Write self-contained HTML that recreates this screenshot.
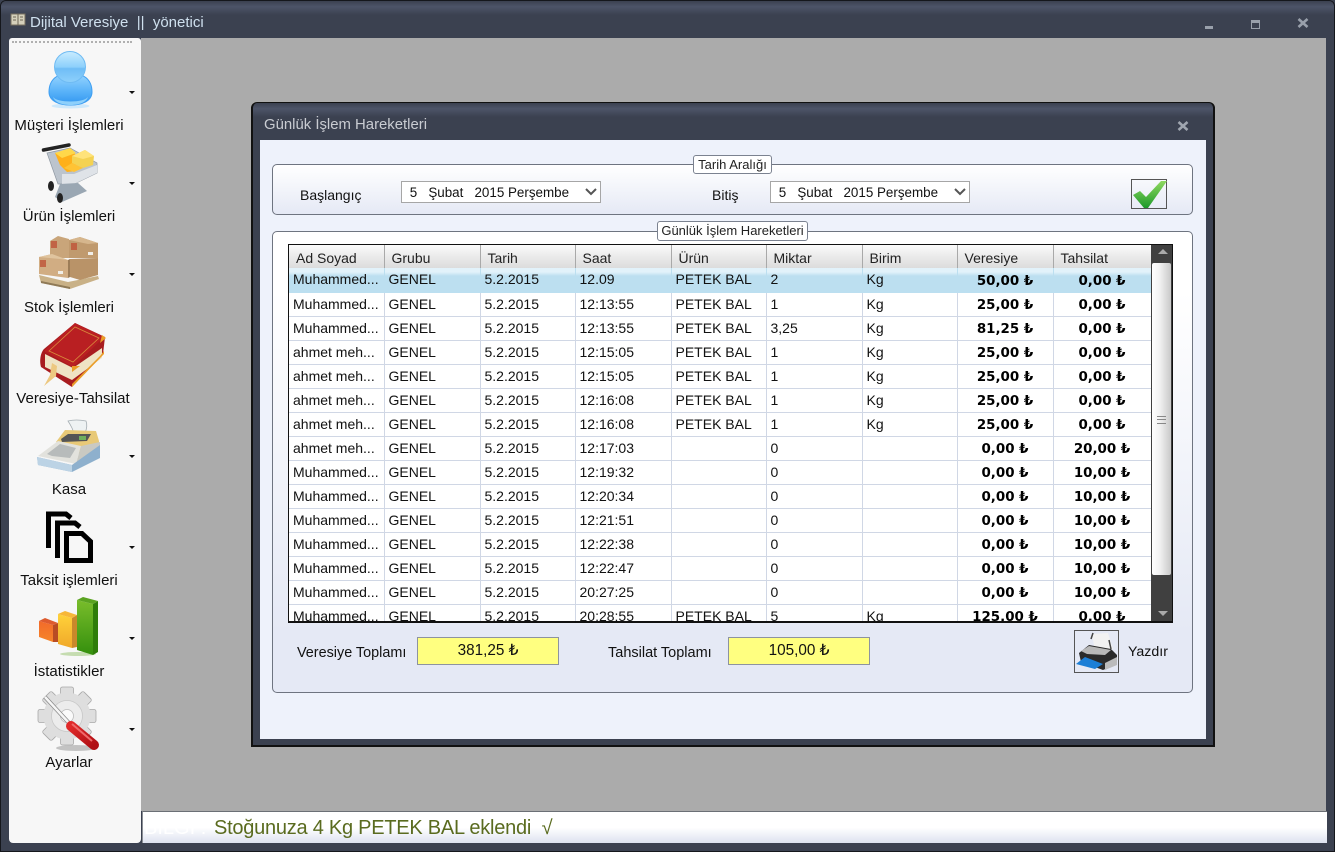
<!DOCTYPE html>
<html lang="tr"><head><meta charset="utf-8"><title>Dijital Veresiye</title>
<style>
*{box-sizing:border-box}
html,body{margin:0;padding:0;width:1335px;height:852px;overflow:hidden;background:#3b4150;font-family:"Liberation Sans",sans-serif}
.a{position:absolute}
#frame{left:0;top:0;width:1335px;height:852px;background:#3b4150;border:1px solid #15171c;border-radius:6px 6px 0 0;overflow:hidden}
#ttl{left:0;top:0;width:1335px;height:14px;background:linear-gradient(#3b4150,#4d5468 40%,#3b4150)}
.side{color:#111;font-size:15px;white-space:nowrap;text-align:center;width:132px;left:2px}
.car{width:0;height:0;border-left:3px solid transparent;border-right:3px solid transparent;border-top:3px solid #111;left:128px}
table{border-collapse:collapse;table-layout:fixed;position:absolute;left:0;top:0;width:862px;font-size:14px;color:#111}
td{height:24px;padding:0 0 0 4px;border-right:1px solid #d0d7e5;border-bottom:1px solid #d0d7e5;white-space:nowrap;overflow:hidden;line-height:17px}
td.m{font-family:"DejaVu Sans","Liberation Sans",sans-serif;font-weight:bold;font-size:13.4px;text-align:center;padding:3px 0 0 0;color:#000}
th{height:23px;font-weight:normal;text-align:left;padding:3px 0 0 7px;font-size:14px;color:#222;border-right:1px solid #a9a9a9;background:linear-gradient(#fbfbfb,#ececec 45%,#dcdcdc)}
tr.s td{background:linear-gradient(#e2f2fa 0,#e2f2fa 4px,#bcdff0 8px,#bcdff0);border-right-color:#bcdff0;border-bottom-color:#bcdff0}
.sel{height:22px;width:200px;background:#fff;border:1px solid #a6a6a6;font-size:13.4px;color:#111;padding:2px 0 0 4px;white-space:pre;line-height:17px}
.leg{background:#fff;border:1px solid #7b8290;border-radius:3px;font-size:13px;color:#222;text-align:center;white-space:nowrap}
.lbl{font-size:14px;color:#111;white-space:nowrap}
.y{background:#ffff80;border:1px solid #8d93a0;width:142px;height:28px;text-align:center;font-size:15.3px;color:#111;line-height:26px}
</style></head><body>
<div class="a" id="frame">
<div class="a" id="ttl"></div>
<svg class="a" style="left:9px;top:12px" width="16" height="14" viewBox="0 0 16 14"><rect x="1" y="1" width="14" height="11" fill="#d5d0bb" stroke="#77705f"/><path d="M8 1v11M3 4h3M3 7h3M10 4h3M10 7h3" stroke="#6d6655"/></svg>
<div class="a" style="left:29px;top:13px;font-size:15px;color:#cfe0ee;white-space:pre">Dijital Veresiye  ||  yönetici</div>
<div class="a" style="left:1204px;top:25px;width:8px;height:3px;background:#99a0ab"></div>
<div class="a" style="left:1250px;top:19px;width:9px;height:9px;border:1px solid #99a0ab;border-top:3px solid #99a0ab"></div>
<svg class="a" style="left:1296px;top:17px" width="12" height="10"><path d="M1.5 1l9 8M10.5 1l-9 8" stroke="#99a0ab" stroke-width="2.6"/></svg>

<!-- MDI -->
<div class="a" style="left:140px;top:37px;width:1185px;height:773px;background:#ababab"></div>

<!-- Sidebar -->
<div class="a" style="left:8px;top:37px;width:132px;height:805px;background:#f7f7f7;border-radius:3px 3px 4px 4px"></div>
<div class="a" style="left:11px;top:40px;width:120px;border-top:2px dotted #b0b0b0"></div>

<svg class="a" style="left:-1px;top:-1px" width="142" height="800" viewBox="0 0 142 800">
<defs>
<linearGradient id="b1" x1="0" y1="0" x2="0" y2="1"><stop offset="0" stop-color="#9bd6ff"/><stop offset=".55" stop-color="#5cb4f9"/><stop offset="1" stop-color="#2f95f0"/></linearGradient>
<linearGradient id="b2" x1="0" y1="0" x2="0" y2="1"><stop offset="0" stop-color="#c9ecff"/><stop offset=".5" stop-color="#8dd0fb"/><stop offset=".55" stop-color="#6fbdf6"/><stop offset="1" stop-color="#8ed0fb"/></linearGradient>
<linearGradient id="g1" x1="0" y1="0" x2="0" y2="1"><stop offset="0" stop-color="#79bd2b"/><stop offset="1" stop-color="#348f0d"/></linearGradient>
<linearGradient id="g2" x1="0" y1="0" x2="0" y2="1"><stop offset="0" stop-color="#ffd23a"/><stop offset="1" stop-color="#f0a82a"/></linearGradient>
<linearGradient id="g3" x1="0" y1="0" x2="0" y2="1"><stop offset="0" stop-color="#f26a2a"/><stop offset="1" stop-color="#f6852a"/></linearGradient>
<linearGradient id="rd" x1="0" y1="0" x2="1" y2="1"><stop offset="0" stop-color="#e02a2a"/><stop offset="1" stop-color="#b00f14"/></linearGradient>
</defs>
<!-- person -->
<ellipse cx="70.500" cy="106" rx="19" ry="2.500" fill="#cfe9fb"/>
<path d="M49 92C49 79 58 73 70.500 73S92 79 92 92c0 9-10 13-21.500 13S49 101 49 92z" fill="url(#b1)" stroke="#3f9ff2"/>
<path d="M53 97c4 6 31 6 35 0c-2 6-10 8-17.500 8S55 103 53 97z" fill="#8ed0fb"/>
<circle cx="70" cy="67" r="15.500" fill="url(#b2)" stroke="#6fbbf3"/>
<!-- cart -->
<path d="M43.500 150L69 145" stroke="#222" stroke-width="3.500" stroke-linecap="round"/>
<path d="M47 153L70 148L97 163V173L74 184H58z" fill="#bcc4cd" stroke="#8f98a2" stroke-width=".7"/>
<path d="M62 174H74L97 165V173L74 184H62z" fill="#dfe3e8"/>
<path d="M55 153L70 149L76 155V171L67 172L60 165z" fill="#ffb01a"/>
<path d="M55 153L70 148L76 153L62 158z" fill="#ffd84a"/>
<path d="M72 156L85 150L94 156L93 165L83 168L72 163z" fill="#f4d252"/>
<path d="M72 156L83 159L94 156L85 150z" fill="#ffe37a"/>
<path d="M64 168L72 163L83 168L74 172z" fill="#ffc335"/>
<path d="M60 184L78 183L87 191L62 202L55 197z" fill="#9aa7b3"/>
<ellipse cx="51" cy="186" rx="3" ry="5" fill="#222"/><ellipse cx="60" cy="198" rx="3" ry="5" fill="#222"/>
<!-- boxes -->
<path d="M39 275L68 282L98 276L99 279L70 289L41 283z" fill="#c9b187"/>
<path d="M41 281L70 287L70 289L41 283z" fill="#8f7a57"/>
<path d="M50 241L58 236L69 239V258H50z" fill="#c9a57a"/>
<path d="M69 240L80 237L98 243V258H69z" fill="#c09a6e"/>
<path d="M69 240L80 237L98 243L88 244z" fill="#d6b68d"/>
<path d="M70 259L98 258V275L80 280L70 277z" fill="#b99368"/>
<path d="M39 257L52 254L68 260V278L39 274z" fill="#d1ad83"/>
<path d="M39 257L52 254L68 260L60 259z" fill="#e0c49e"/>
<path d="M68 260L70 259V277L68 278z" fill="#9d7d58"/>
<path d="M51 241h6v7h-6zM71 243h6v7h-6zM40 260h6v7h-6z" fill="#c0583c" opacity=".85"/>
<path d="M88 252h5v3h-5zM58 271h5v3h-5z" fill="#f0eee8"/>
<!-- book -->
<path d="M41 367C39 360 41 352 44 349L75 323L105 337L103 354L72 387z" fill="#a81c1f"/>
<path d="M44 351L75 323L104 337L73 367z" fill="#b91f22"/>
<path d="M49 351L75 327L99 338L73 362z" fill="none" stroke="#d98c3c" stroke-width=".8"/>
<path d="M45 354L73 368L102 348V358L72 380L45 367z" fill="#efe3c4"/>
<path d="M102 335L106 338L100 343zM104 351L100 356L72 384L72 387L104 354z" fill="#ea9d28"/>
<path d="M72 366L80 366L72 372z" fill="#ea9d28"/>
<path d="M52 363L57 366L56 376L44 386L50 375z" fill="#edc880"/>
<!-- register -->
<path d="M68 421Q76 419 86 421Q88 426 85 433H74L72 428Q70 424 68 421z" fill="#eef2f3" stroke="#a4adb2" stroke-width=".8"/>
<path d="M56 442L65 430L96 431L99 441L99 447L78 454z" fill="#e8c977"/>
<path d="M61 439L68 434L91 434L87 441L62 442z" fill="#555"/><rect x="79" y="436" width="7" height="4" fill="#6fae5d"/>
<path d="M38 456L58 441L81 446L76 464z" fill="#e2e2dd"/>
<path d="M47 454L60 444L76 448L70 458L52 456z" fill="#b7bbbb"/>
<path d="M81 446L100 442V446L76 464z" fill="#c9c9c2"/>
<path d="M37 457L72 465L100 445V458L72 472L38 465z" fill="#8eb0cd"/>
<path d="M37 457L72 465V472L38 465z" fill="#bcd3e5"/>
<!-- docs -->
<path d="M48.500 548V514H66L71 518M57.500 558V523H75L80 527" fill="none" stroke="#000" stroke-width="5"/>
<path d="M66.500 533.500V560.500H90.500V541.500L82 533.500z" fill="none" stroke="#000" stroke-width="5"/>
<!-- chart -->
<ellipse cx="78" cy="654" rx="18" ry="2" fill="#c5dcb0"/>
<path d="M39 621L53 625V642L39 637z" fill="url(#g3)"/><path d="M53 625L58 623V642L53 642z" fill="#b94c24"/><path d="M39 621L45 618L58 623L53 625z" fill="#dd5b2e"/>
<path d="M58 614L72 618V648L58 644z" fill="url(#g2)"/><path d="M72 618L77 615V647L72 648z" fill="#c9882b"/><path d="M58 614L65 611L77 615L72 618z" fill="#f7b738"/>
<path d="M77 600L93 604V655L77 650z" fill="url(#g1)"/><path d="M93 604L98 601V652L93 655z" fill="#2f7d0a"/><path d="M77 600L83 597L98 601L93 604z" fill="#5aa320"/>
<!-- gear -->
<ellipse cx="76" cy="748" rx="20" ry="3" fill="#999" opacity=".55"/>
<g transform="translate(67 716)" fill="#dedede" stroke="#a8a8a8" stroke-width=".8">
<rect x="-6.500" y="-29" width="13" height="58" rx="2"/>
<rect x="-6.500" y="-29" width="13" height="58" rx="2" transform="rotate(45)"/>
<rect x="-6.500" y="-29" width="13" height="58" rx="2" transform="rotate(90)"/>
<rect x="-6.500" y="-29" width="13" height="58" rx="2" transform="rotate(135)"/>
<circle r="23.500" stroke="none"/>
<circle r="15.500" fill="#ececec" stroke="#c8c8c8"/>
<circle r="6.500" fill="#fafafa" stroke="#bcbcbc"/>
</g>
<path d="M45 697L69 723" stroke="#8a8a8a" stroke-width="4"/>
<path d="M45 697L69 723" stroke="#f6f6f6" stroke-width="2.500"/>
<path d="M71 726L94 745" stroke="url(#rd)" stroke-width="10" stroke-linecap="round"/>
<path d="M72 724L92 741" stroke="#f06a6a" stroke-width="2"/>
</svg>

<div class="a side" style="top:116px">Müşteri İşlemleri</div>
<div class="a car" style="top:90px"></div>
<div class="a side" style="top:207px">Ürün İşlemleri</div>
<div class="a car" style="top:181px"></div>
<div class="a side" style="top:298px">Stok İşlemleri</div>
<div class="a car" style="top:272px"></div>
<div class="a side" style="top:389px;left:6px">Veresiye-Tahsilat</div>
<div class="a side" style="top:480px">Kasa</div>
<div class="a car" style="top:454px"></div>
<div class="a side" style="top:571px">Taksit işlemleri</div>
<div class="a car" style="top:545px"></div>
<div class="a side" style="top:662px">İstatistikler</div>
<div class="a car" style="top:636px"></div>
<div class="a side" style="top:753px">Ayarlar</div>
<div class="a car" style="top:727px"></div>

<!-- Status -->
<div class="a" style="left:141px;top:810px;width:1185px;height:32px;background:linear-gradient(#fff,#fff 50%,#dde2f0);border-top:1px solid #6b6f75;border-left:1px solid #8a8e94"></div>
<div class="a" style="left:143px;top:816px;font-size:20px;color:#fff;white-space:nowrap">BİLGİ :</div>
<div class="a" style="left:213px;top:816px;font-size:20px;color:#5a6b1f;white-space:pre;letter-spacing:-.25px">Stoğunuza 4 Kg PETEK BAL eklendi  √</div>

<!-- Dialog -->
<div class="a" style="left:250px;top:101px;width:964px;height:645px;background:#3b4150;border:2px solid #111;border-top-width:1px;border-radius:6px 6px 0 0"></div>
<div class="a" style="left:252px;top:102px;width:960px;height:14px;border-radius:5px 5px 0 0;background:linear-gradient(#3b4150,#4d5468 40%,#3b4150)"></div>
<div class="a" style="left:263px;top:116px;font-size:14.9px;color:#c9ccd2;white-space:nowrap">Günlük İşlem Hareketleri</div>
<svg class="a" style="left:1176px;top:120px" width="12" height="10"><path d="M1.5 1l9 8M10.5 1l-9 8" stroke="#a0a6b0" stroke-width="2.600"/></svg>
<div class="a" style="left:259px;top:139px;width:946px;height:599px;background:#eef2fb"></div>

<!-- Group 1 -->
<div class="a" style="left:271px;top:163px;width:921px;height:51px;border:1px solid #6e7480;border-radius:5px;background:linear-gradient(#fff,#e5e9f5)"></div>
<div class="a leg" style="left:692px;top:154px;width:79px;height:19px;line-height:17px">Tarih Aralığı</div>
<div class="a lbl" style="left:299px;top:186px">Başlangıç</div>
<div class="a sel" style="left:400px;top:180px"> 5   Şubat   2015 Perşembe</div>
<svg class="a" style="left:584px;top:187px" width="12" height="8"><path d="M1 1l5 5 5-5" fill="none" stroke="#555" stroke-width="2"/></svg>
<div class="a lbl" style="left:711px;top:186px">Bitiş</div>
<div class="a sel" style="left:769px;top:180px"> 5   Şubat   2015 Perşembe</div>
<svg class="a" style="left:953px;top:187px" width="12" height="8"><path d="M1 1l5 5 5-5" fill="none" stroke="#555" stroke-width="2"/></svg>
<div class="a" style="left:1130px;top:178px;width:36px;height:30px;border:1px solid #555"></div>
<svg class="a" style="left:1131px;top:179px" width="36" height="29" viewBox="0 0 36 29"><defs><linearGradient id="ck" x1="0" y1="0" x2="0" y2="1"><stop offset="0" stop-color="#8fd860"/><stop offset="1" stop-color="#1d9a2a"/></linearGradient></defs><path d="M1 15L8 11L14 17L29 1H35L16 28H12z" fill="url(#ck)"/></svg>

<!-- Group 2 -->
<div class="a" style="left:271px;top:230px;width:921px;height:462px;border:1px solid #6e7480;border-radius:5px;background:linear-gradient(#fff,#fff 60px,#e5e9f5 400px)"></div>
<div class="a leg" style="left:656px;top:220px;width:151px;height:20px;line-height:18px">Günlük İşlem Hareketleri</div>

<!-- Grid -->
<div class="a" style="left:287px;top:243px;width:885px;height:379px;background:#fff;border:1px solid #111;border-bottom-width:2px;overflow:hidden">
<table><colgroup><col style="width:95px"><col style="width:96px"><col style="width:95px"><col style="width:96px"><col style="width:95px"><col style="width:96px"><col style="width:95px"><col style="width:96px"><col style="width:98px"></colgroup>
<tr><th>Ad Soyad</th><th>Grubu</th><th>Tarih</th><th>Saat</th><th>Ürün</th><th>Miktar</th><th>Birim</th><th>Veresiye</th><th>Tahsilat</th></tr>
<tr class="s"><td>Muhammed...</td><td>GENEL</td><td>5.2.2015</td><td>12.09</td><td>PETEK BAL</td><td>2</td><td>Kg</td><td class="m">50,00 ₺</td><td class="m">0,00 ₺</td></tr>
<tr><td>Muhammed...</td><td>GENEL</td><td>5.2.2015</td><td>12:13:55</td><td>PETEK BAL</td><td>1</td><td>Kg</td><td class="m">25,00 ₺</td><td class="m">0,00 ₺</td></tr>
<tr><td>Muhammed...</td><td>GENEL</td><td>5.2.2015</td><td>12:13:55</td><td>PETEK BAL</td><td>3,25</td><td>Kg</td><td class="m">81,25 ₺</td><td class="m">0,00 ₺</td></tr>
<tr><td>ahmet meh...</td><td>GENEL</td><td>5.2.2015</td><td>12:15:05</td><td>PETEK BAL</td><td>1</td><td>Kg</td><td class="m">25,00 ₺</td><td class="m">0,00 ₺</td></tr>
<tr><td>ahmet meh...</td><td>GENEL</td><td>5.2.2015</td><td>12:15:05</td><td>PETEK BAL</td><td>1</td><td>Kg</td><td class="m">25,00 ₺</td><td class="m">0,00 ₺</td></tr>
<tr><td>ahmet meh...</td><td>GENEL</td><td>5.2.2015</td><td>12:16:08</td><td>PETEK BAL</td><td>1</td><td>Kg</td><td class="m">25,00 ₺</td><td class="m">0,00 ₺</td></tr>
<tr><td>ahmet meh...</td><td>GENEL</td><td>5.2.2015</td><td>12:16:08</td><td>PETEK BAL</td><td>1</td><td>Kg</td><td class="m">25,00 ₺</td><td class="m">0,00 ₺</td></tr>
<tr><td>ahmet meh...</td><td>GENEL</td><td>5.2.2015</td><td>12:17:03</td><td></td><td>0</td><td></td><td class="m">0,00 ₺</td><td class="m">20,00 ₺</td></tr>
<tr><td>Muhammed...</td><td>GENEL</td><td>5.2.2015</td><td>12:19:32</td><td></td><td>0</td><td></td><td class="m">0,00 ₺</td><td class="m">10,00 ₺</td></tr>
<tr><td>Muhammed...</td><td>GENEL</td><td>5.2.2015</td><td>12:20:34</td><td></td><td>0</td><td></td><td class="m">0,00 ₺</td><td class="m">10,00 ₺</td></tr>
<tr><td>Muhammed...</td><td>GENEL</td><td>5.2.2015</td><td>12:21:51</td><td></td><td>0</td><td></td><td class="m">0,00 ₺</td><td class="m">10,00 ₺</td></tr>
<tr><td>Muhammed...</td><td>GENEL</td><td>5.2.2015</td><td>12:22:38</td><td></td><td>0</td><td></td><td class="m">0,00 ₺</td><td class="m">10,00 ₺</td></tr>
<tr><td>Muhammed...</td><td>GENEL</td><td>5.2.2015</td><td>12:22:47</td><td></td><td>0</td><td></td><td class="m">0,00 ₺</td><td class="m">10,00 ₺</td></tr>
<tr><td>Muhammed...</td><td>GENEL</td><td>5.2.2015</td><td>20:27:25</td><td></td><td>0</td><td></td><td class="m">0,00 ₺</td><td class="m">10,00 ₺</td></tr>
<tr><td>Muhammed...</td><td>GENEL</td><td>5.2.2015</td><td>20:28:55</td><td>PETEK BAL</td><td>5</td><td>Kg</td><td class="m">125,00 ₺</td><td class="m">0,00 ₺</td></tr>
</table>
<div class="a" style="left:862px;top:0;width:22px;height:376px;background:#404040"></div>
<div class="a" style="left:869px;top:4px;width:0;height:0;border-left:5px solid transparent;border-right:5px solid transparent;border-bottom:5px solid #aaa"></div>
<div class="a" style="left:869px;top:366px;width:0;height:0;border-left:5px solid transparent;border-right:5px solid transparent;border-top:5px solid #aaa"></div>
<div class="a" style="left:863px;top:18px;width:19px;height:312px;border-radius:2px;background:linear-gradient(90deg,#fff,#f2f2f2 40%,#c9c9c9)"></div>
<div class="a" style="left:868px;top:171px;width:9px;height:8px;border-top:1px solid #888;border-bottom:1px solid #888"></div>
<div class="a" style="left:868px;top:174px;width:9px;height:2px;border-top:1px solid #888"></div>
</div>

<!-- Totals -->
<div class="a lbl" style="left:296px;top:644px;font-size:14.4px">Veresiye Toplamı</div>
<div class="a y" style="left:416px;top:636px">381,25 ₺</div>
<div class="a lbl" style="left:607px;top:644px;font-size:14.5px">Tahsilat Toplamı</div>
<div class="a y" style="left:727px;top:636px">105,00 ₺</div>
<div class="a" style="left:1073px;top:629px;width:45px;height:43px;border:1px solid #555"></div>
<svg class="a" style="left:1074px;top:630px" width="44" height="41" viewBox="0 0 44 41">
<path d="M17 3L33 2L38 18L20 20z" fill="#f2f2f2"/>
<path d="M16 8L18 2M34 9L36 18" stroke="#444" stroke-width="1.500"/>
<path d="M4 22L14 14L36 18L42 24V33L28 39L6 31z" fill="#2a2a2a"/>
<path d="M6 20L14 15L36 19L30 24L12 23z" fill="#b8b8b8"/>
<path d="M1 33L10 26L28 33L20 38z" fill="#1c7fd6"/>
<path d="M30 32L42 26V34L30 39z" fill="#bbb"/>
</svg>
<div class="a lbl" style="left:1127px;top:643px;font-size:14.2px">Yazdır</div>
</div>
</body></html>
